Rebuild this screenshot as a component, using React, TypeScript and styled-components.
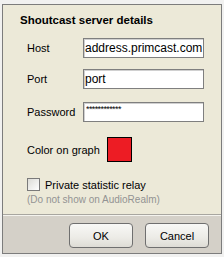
import React from "react";
import styled, { createGlobalStyle } from "styled-components";

const Global = createGlobalStyle`
  html, body { margin: 0; padding: 0; }
  body {
    width: 224px;
    height: 257px;
    overflow: hidden;
    background: #f1f1f0;
    font-family: "Liberation Sans", Arial, sans-serif;
  }
`;

const Outer = styled.div`
  padding: 4px 2px 3px 2px;
  box-sizing: border-box;
  height: 257px;
`;

const Panel = styled.div`
  height: 250px;
  box-sizing: border-box;
  border: 1px solid #7c7c7c;
  background: #ece9d8;
  display: flex;
  flex-direction: column;
`;

const Content = styled.div`
  flex: 1;
  padding: 7px 0 0 17px;
  display: flex;
  flex-direction: column;
`;

const Title = styled.div`
  font-weight: bold;
  font-size: 11.5px;
  line-height: 16px;
  color: #000;
`;

const Row = styled.div<{ $top: number; $h?: number }>`
  display: flex;
  align-items: center;
  margin-top: ${(p) => p.$top}px;
  padding-left: 7px;
  height: ${(p) => p.$h ?? 20}px;
`;

const Label = styled.div<{ $w?: number }>`
  width: ${(p) => p.$w ?? 56}px;
  font-size: 11px;
  color: #000;
  white-space: nowrap;
`;

const Field = styled.input<{ $small?: boolean }>`
  width: 121px;
  height: 20px;
  box-sizing: border-box;
  margin: 0;
  border: 1px solid #7f7f7f;
  box-shadow: inset 1px 1px 0 #d0d0d0;
  background: #fff;
  padding: ${(p) => (p.$small ? "0 0 7px 2px" : "0 0 0 1px")};
  font-family: "Liberation Sans", Arial, sans-serif;
  font-size: ${(p) => (p.$small ? "9px" : "12px")};
  letter-spacing: ${(p) => (p.$small ? "-0.6px" : "0")};
  color: #000;
  outline: none;
`;

const Swatch = styled.div<{ $color: string }>`
  width: 25px;
  height: 25px;
  box-sizing: border-box;
  border: 1px solid #000;
  background: ${(p) => p.$color};
`;

const CheckRow = styled.label`
  display: flex;
  align-items: center;
  margin-top: 16px;
  padding-left: 7px;
  height: 13px;
  font-size: 11px;
  color: #000;
`;

const Box = styled.span`
  width: 13px;
  height: 13px;
  box-sizing: border-box;
  border: 1px solid #7a7a7a;
  background: linear-gradient(135deg, #dcdcd7, #ffffff);
  margin-right: 5px;
`;

const Note = styled.div`
  padding-left: 7px;
  margin-top: 3px;
  font-size: 10px;
  color: #939393;
`;

const Footer = styled.div`
  height: 39px;
  box-sizing: border-box;
  border-top: 1px solid #a8a6a0;
  box-shadow: inset 0 1px 0 #f4f3ee;
  background: #d4d0c8;
  display: flex;
  justify-content: flex-end;
  align-items: flex-start;
  gap: 12px;
  padding: 8px 12px 0 0;
`;

const Button = styled.button`
  width: 64px;
  height: 25px;
  box-sizing: border-box;
  border: 1px solid #6f6f6f;
  border-radius: 4px;
  background: linear-gradient(#f8f8f6, #ecebe6 60%, #dedcd5);
  font-family: "Liberation Sans", Arial, sans-serif;
  font-size: 11px;
  color: #000;
  padding: 0;
`;

export default function App() {
  return (
    <>
      <Global />
      <Outer>
        <Panel>
          <Content>
            <Title>Shoutcast server details</Title>
            <Row $top={10}>
              <Label>Host</Label>
              <Field defaultValue="address.primcast.com" />
            </Row>
            <Row $top={11}>
              <Label>Port</Label>
              <Field defaultValue="port" />
            </Row>
            <Row $top={13}>
              <Label>Password</Label>
              <Field $small defaultValue="************" />
            </Row>
            <Row $top={15} $h={25}>
              <Label $w={80}>Color on graph</Label>
              <Swatch $color="#ed1c24" />
            </Row>
            <CheckRow>
              <Box />
              Private statistic relay
            </CheckRow>
            <Note>(Do not show on AudioRealm)</Note>
          </Content>
          <Footer>
            <Button>OK</Button>
            <Button>Cancel</Button>
          </Footer>
        </Panel>
      </Outer>
    </>
  );
}
